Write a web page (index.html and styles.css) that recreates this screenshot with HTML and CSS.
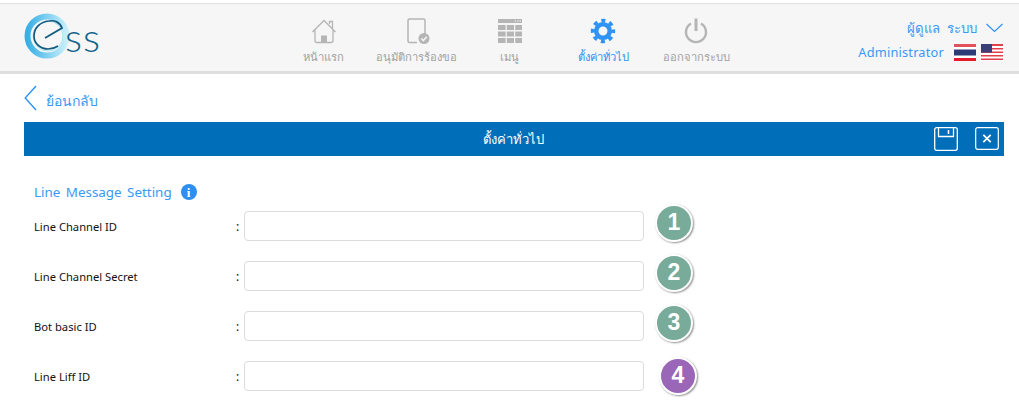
FILE: index.html
```html
<!DOCTYPE html>
<html lang="th">
<head>
<meta charset="utf-8">
<title>ESS</title>
<link rel="stylesheet" href="styles.css">
</head>
<body>
<header class="header">
  <div class="logo">
    <svg class="logo-mark" width="46" height="46" viewBox="0 0 46 46">
      <defs>
        <linearGradient id="ring" x1="0" y1="0" x2="1" y2="0">
          <stop offset="0" stop-color="#38b0e6"/>
          <stop offset="1" stop-color="#c8effa"/>
        </linearGradient>
      </defs>
      <circle cx="23" cy="23" r="19.5" fill="none" stroke="url(#ring)" stroke-width="6"/>
      <circle cx="24" cy="23" r="15" fill="none" stroke="#a5e3f5" stroke-width="1"/>
      <path d="M21 25 L38 15 C36 9 30 7 25 8 C16 9 10 15 10 23 C10 31 17 36 24 36 C28 36 31 35 34 33" fill="none" stroke="#135c80" stroke-width="1.7"/>
    </svg>
    <span class="logo-text">ss</span>
  </div>
  <nav class="nav">
    <a class="nav-item">
      <svg class="nav-icon" width="26" height="26" viewBox="0 0 26 26" fill="none" stroke="#b5b5b5" stroke-width="1.3">
        <path d="M1.5 14 L13 2.5 L24.5 14 M18.5 6 V3.5 H21.5 V10 M4 12 V22.5 Q4 24.5 6 24.5 H20 Q22 24.5 22 22.5 V12"/>
        <path d="M10 24 V17.5 H16 V24" fill="#b5b5b5" stroke="none"/>
      </svg>
      <span>หน้าแรก</span>
    </a>
    <a class="nav-item">
      <svg class="nav-icon" width="26" height="26" viewBox="0 0 26 26" fill="none" stroke="#b5b5b5" stroke-width="1.5">
        <path d="M13 24.5 H5.5 Q4 24.5 4 23 V2.5 Q4 1 5.5 1 H19.5 Q21 1 21 2.5 V16"/>
        <circle cx="20" cy="20.5" r="5.5" fill="#b5b5b5" stroke="none"/>
        <path d="M17.3 20.5 L19.4 22.6 L22.8 18.8" stroke="#f5f5f5" stroke-width="1.5"/>
      </svg>
      <span>อนุมัติการร้องขอ</span>
    </a>
    <a class="nav-item">
      <svg class="nav-icon" width="26" height="26" viewBox="0 0 26 26" fill="#b5b5b5">
        <path d="M1 1 H25 V5 H1 Z"/>
        <path d="M1 7 H8.6 V12 H1 Z M9.8 7 H17 V12 H9.8 Z M18.2 7 H25 V12 H18.2 Z M1 13.5 H8.6 V18.5 H1 Z M9.8 13.5 H17 V18.5 H9.8 Z M18.2 13.5 H25 V18.5 H18.2 Z M1 20 H8.6 V25 H1 Z M9.8 20 H17 V25 H9.8 Z M18.2 20 H25 V25 H18.2 Z"/>
        <path d="M17.5 2.4 H19 V3.6 H17.5 Z M20 2.4 H21.5 V3.6 H20 Z M22.5 2.4 H24 V3.6 H22.5 Z" fill="#f5f5f5"/>
      </svg>
      <span>เมนู</span>
    </a>
    <a class="nav-item nav-item-active">
      <svg class="nav-icon" width="26" height="26" viewBox="0 0 26 26" fill="none" stroke="#2e93f5">
        <circle cx="13" cy="13" r="6.8" stroke-width="4.6"/>
        <circle cx="13" cy="13" r="10.4" stroke-width="3.6" stroke-dasharray="4.1 4.07" stroke-dashoffset="2.05"/>
      </svg>
      <span>ตั้งค่าทั่วไป</span>
    </a>
    <a class="nav-item">
      <svg class="nav-icon" width="26" height="26" viewBox="0 0 26 26" fill="none" stroke="#b5b5b5" stroke-width="2.4">
        <path d="M8 5.5 A10 10 0 1 0 18 5.5"/>
        <path d="M13 0.5 V13" stroke-width="3"/>
      </svg>
      <span>ออกจากระบบ</span>
    </a>
  </nav>
  <div class="user">
    <div class="user-top">
      <span class="user-role">ผู้ดูแล ระบบ</span>
      <svg width="17" height="10" viewBox="0 0 17 10" fill="none" stroke="#2e93f5" stroke-width="1.2"><path d="M0.5 1 L8.5 8.5 L16.5 1"/></svg>
    </div>
    <div class="user-bottom">
      <span class="user-name">Administrator</span>
      <svg class="flag" width="22" height="17" viewBox="0 0 22 17">
        <rect width="22" height="17" fill="#fff"/>
        <rect width="22" height="3" fill="#e4515c"/>
        <rect y="5.5" width="22" height="6" fill="#2d3a78"/>
        <rect y="14" width="22" height="3" fill="#e31c2d"/>
      </svg>
      <svg class="flag" width="22" height="17" viewBox="0 0 22 17">
        <rect width="22" height="17" fill="#fff"/>
        <path d="M0 0 H22 V2 H0 Z M0 4 H22 V5.5 H0 Z M0 7.5 H22 V9 H0 Z M0 11 H22 V12.5 H0 Z M0 14.5 H22 V16 H0 Z" fill="#e2404c"/>
        <rect width="11" height="8.5" fill="#3a3f78"/>
      </svg>
    </div>
  </div>
</header>

<a class="back">
  <svg width="13" height="26" viewBox="0 0 13 26" fill="none" stroke="#2e93f5" stroke-width="1.4"><path d="M12 1 L1.2 13 L12 25"/></svg>
  <span class="back-text">ย้อนกลับ</span>
</a>

<div class="title-bar">
  <span class="title">ตั้งค่าทั่วไป</span>
  <div class="title-actions">
    <svg width="24" height="24" viewBox="0 0 24 24" fill="none" stroke="#fff" stroke-width="1.3">
      <rect x="0.7" y="0.7" width="22.6" height="22.6" rx="2"/>
      <path d="M4.5 1 V9.5 H19.5 V1"/>
      <path d="M14.5 3 V7" stroke-width="1.6"/>
    </svg>
    <svg width="24" height="23" viewBox="0 0 24 23" fill="none" stroke="#fff" stroke-width="1.2">
      <rect x="0.7" y="0.7" width="22.6" height="21.6" rx="2"/>
      <path d="M8.3 7.8 L15.7 15.2 M15.7 7.8 L8.3 15.2" stroke-width="1.7"/>
    </svg>
  </div>
</div>

<main class="form">
  <div class="section-title">
    <span>Line Message Setting</span>
    <span class="info">i</span>
  </div>
  <div class="row">
    <label class="row-label">Line Channel ID</label>
    <span class="row-colon">:</span>
    <input class="row-input" type="text">
    <span class="step step-green">1</span>
  </div>
  <div class="row">
    <label class="row-label">Line Channel Secret</label>
    <span class="row-colon">:</span>
    <input class="row-input" type="text">
    <span class="step step-green">2</span>
  </div>
  <div class="row">
    <label class="row-label">Bot basic ID</label>
    <span class="row-colon">:</span>
    <input class="row-input" type="text">
    <span class="step step-green">3</span>
  </div>
  <div class="row">
    <label class="row-label">Line Liff ID</label>
    <span class="row-colon">:</span>
    <input class="row-input" type="text">
    <span class="step step-purple">4</span>
  </div>
</main>
</body>
</html>
```
FILE: styles.css
```css
html, body {
  margin: 0;
  padding: 0;
  height: 408px;
  overflow: hidden;
  background: #fff;
  font-family: "Noto Sans", "Open Sans", "Noto Sans CJK SC", sans-serif;
}

.header {
  display: flex;
  align-items: stretch;
  box-sizing: border-box;
  height: 71px;
  margin-top: 3px;
  border-top: 1px solid #e2e2e2;
  border-bottom: 3px solid #dedede;
  background: #f6f6f6;
  padding-left: 24px;
}

.logo {
  display: flex;
  align-items: center;
  width: 253px;
  padding-bottom: 3px;
}

.logo-mark {
  margin-right: -5px;
}

.logo-text {
  font-family: "Lato", sans-serif;
  font-weight: 300;
  font-size: 40px;
  line-height: 1;
  letter-spacing: 1px;
  color: #12638c;
  margin-top: 2px;
}

.nav {
  display: flex;
}

.nav-item {
  display: flex;
  flex-direction: column;
  align-items: center;
  width: 93.2px;
  padding-top: 14px;
  font-size: 11.2px;
  color: #a2a2a2;
}

.nav-item span {
  margin-top: 5px;
  line-height: 16px;
  white-space: nowrap;
}

.nav-item-active {
  color: #2e93f5;
}

.user {
  margin-left: auto;
  padding-right: 16px;
  padding-top: 11px;
  color: #3a98f5;
  text-align: right;
}

.user-top {
  display: flex;
  justify-content: flex-end;
  align-items: center;
  gap: 9px;
  height: 26px;
  font-size: 13.2px;
  word-spacing: 4px;
}

.user-bottom {
  display: flex;
  justify-content: flex-end;
  align-items: center;
  gap: 5px;
  height: 20px;
  margin-top: 1px;
  font-size: 12.8px;
  letter-spacing: 0.2px;
}

.user-name {
  margin-right: 5px;
}

.back {
  display: flex;
  align-items: center;
  gap: 9px;
  height: 48px;
  padding-left: 24px;
  font-size: 14px;
  color: #3a98f5;
}

.back-text {
  margin-top: 5px;
}

.title-bar {
  position: relative;
  display: flex;
  align-items: center;
  justify-content: center;
  height: 34px;
  margin: 0 15px 0 24px;
  padding-right: 2px;
  background: #006eb8;
  color: #fff;
  font-size: 13px;
}

.title-actions {
  position: absolute;
  right: 5px;
  top: 5px;
  display: flex;
  gap: 17px;
}

.form {
  padding: 26px 0 0 34px;
}

.section-title {
  display: flex;
  align-items: center;
  gap: 9px;
  height: 20px;
  font-size: 13.4px;
  word-spacing: 2px;
  color: #3a98f5;
}

.info {
  display: flex;
  align-items: center;
  justify-content: center;
  width: 16px;
  height: 16px;
  border-radius: 50%;
  background: #2e8ff0;
  color: #fff;
  font-family: "Liberation Serif", serif;
  font-weight: 700;
  font-size: 13px;
  line-height: 1;
}

.row {
  display: flex;
  align-items: center;
  height: 30px;
  margin-bottom: 20px;
}

.section-title + .row {
  margin-top: 9px;
}

.row-label {
  width: 202px;
  font-size: 11.2px;
  color: #111;
}

.row-colon {
  width: 8px;
  font-size: 12px;
  color: #111;
}

.row-input {
  box-sizing: border-box;
  width: 400px;
  height: 30px;
  padding: 0 8px;
  border: 1px solid #dcdcdc;
  border-radius: 4px;
  background: #fff;
}

.step {
  display: flex;
  align-items: center;
  justify-content: center;
  flex: none;
  box-sizing: border-box;
  width: 38px;
  height: 38px;
  margin: -7px 0 0 11px;
  border: 2.5px solid #fff;
  border-radius: 50%;
  box-shadow: 1px 1px 2px rgba(0, 0, 0, 0.45);
  font-family: "Liberation Sans", sans-serif;
  font-weight: 700;
  font-size: 23px;
  color: #fff;
}

.step-green {
  background: #78ab9a;
}

.step-purple {
  background: #9a66b8;
  margin: -1px 0 0 15px;
}
```
